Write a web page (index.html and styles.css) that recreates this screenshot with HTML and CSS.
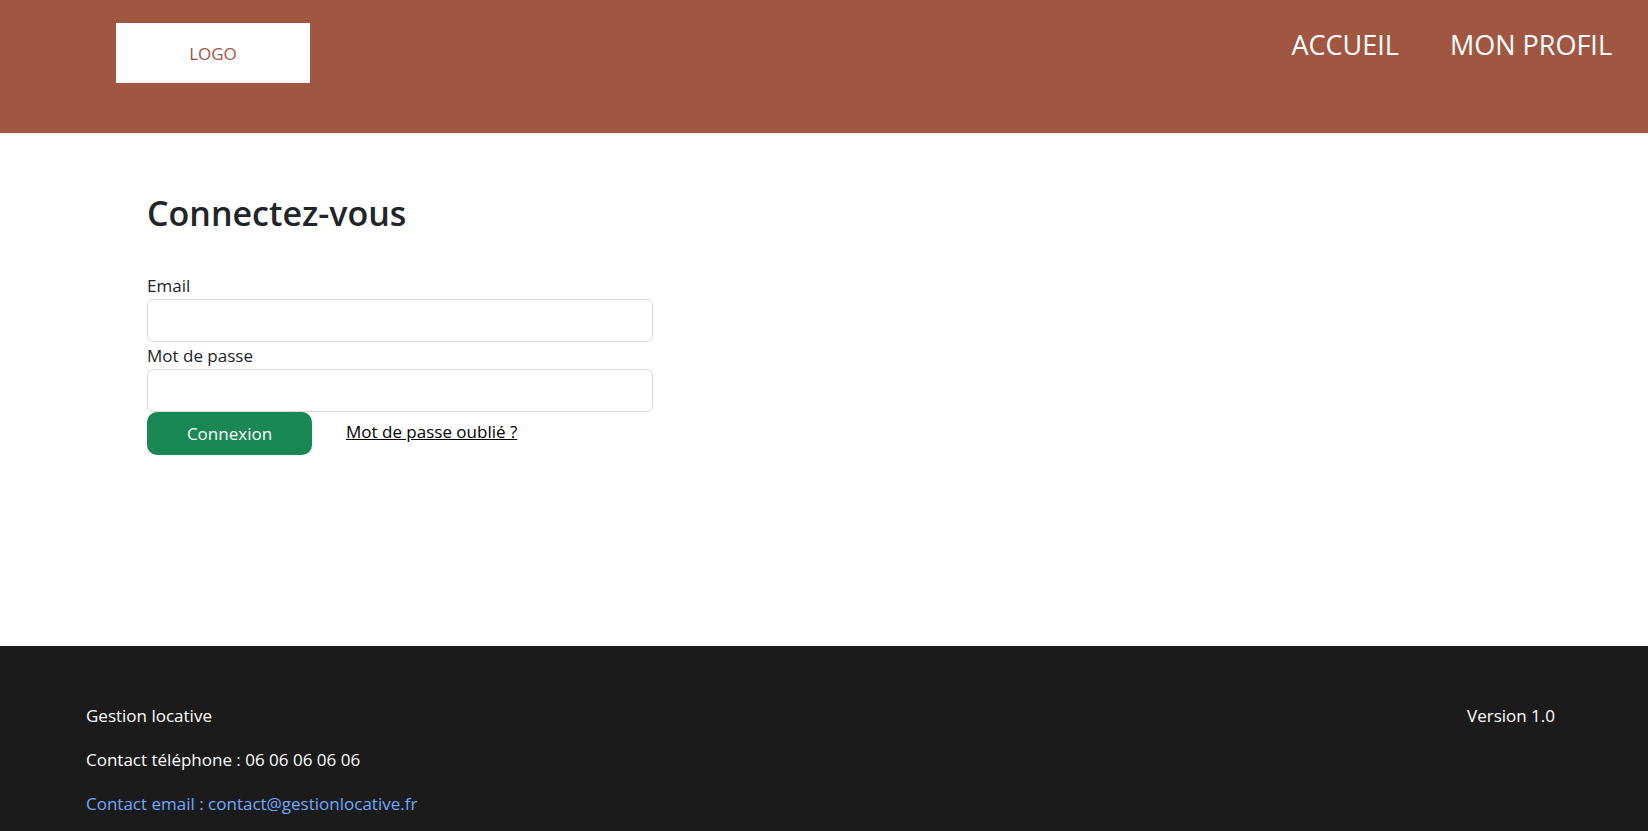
FILE: index.html
```html
<!DOCTYPE html>
<html lang="fr">
<head>
<title>Gestion locative - Connexion</title>
<meta charset="utf-8">
<meta name="viewport" content="width=device-width, initial-scale=1">
    <link rel="stylesheet" href="styles.css">
</head>
<body>
    <header class="topbar">
        <div class="logo">LOGO</div>
        <nav class="topnav">
            <a href="index.html">ACCUEIL</a>
            <a href="profil.html">MON PROFIL</a>
        </nav>
    </header>

    <main class="content">
        <h2>Connectez-vous</h2>
        <form id="loginForm" class="login-form">
            <label for="email">Email</label>
            <input type="email" id="email" name="email">

            <label for="password">Mot de passe</label>
            <input type="password" id="password" name="password">

            <div class="form-actions">
                <button type="submit">Connexion</button>
                <a href="oubli.html">Mot de passe oublié ?</a>
            </div>
        </form>
    </main>

    <footer class="footer">
        <div class="footer-left">
            <p>Gestion locative</p>
            <p>Contact téléphone : 06 06 06 06 06</p>
            <p class="footer-mail">Contact email : contact@gestionlocative.fr</p>
        </div>
        <div class="footer-right">
            <p>Version 1.0</p>
        </div>
    </footer>
</body>
</html>
```

FILE: styles.css
```css
body {
    font-family: "Open Sans", "Noto Sans", Arial, sans-serif;
    margin: 0;
    padding: 0;
    background-color: #fff;
    color: #212529;
    min-height: 100vh;
    display: flex;
    flex-direction: column;
}
.topbar {
    background-color: #a15642;
    height: 133px;
    box-sizing: border-box;
    padding: 23px 36px 0 116px;
    display: flex;
    justify-content: space-between;
    align-items: flex-start;
}
.logo {
    width: 194px;
    height: 60px;
    background: white;
    color: #a15642;
    font-size: 17px;
    display: flex;
    align-items: center;
    justify-content: center;
}
.topnav {
    display: flex;
    gap: 51px;
    margin-top: 3px;
}
.topnav a {
    color: white;
    text-decoration: none;
    font-size: 27px;
    line-height: 38px;
}
.content {
    flex: 1;
    padding: 60px 0 0 147px;
}
.content h2 {
    font-size: 34px;
    font-weight: 600;
    line-height: 40px;
    margin: 0 0 39px;
}
.login-form {
    width: 506px;
    display: flex;
    flex-direction: column;
}
label {
    font-size: 17px;
    line-height: 27px;
}
input {
    height: 43px;
    box-sizing: border-box;
    border: 1px solid #d9d9d9;
    border-radius: 6px;
    padding: 6px 12px;
    font-size: 16px;
    font-family: inherit;
}
.form-actions {
    display: flex;
    align-items: center;
    gap: 34px;
}
button {
    width: 165px;
    height: 43px;
    background-color: #198754;
    color: white;
    border: none;
    border-radius: 10px;
    font-family: inherit;
    font-size: 17px;
    cursor: pointer;
}
.form-actions a {
    color: #000;
    font-size: 17px;
    margin-top: -4px;
}
.footer {
    background-color: #1b1b1b;
    color: white;
    padding: 56px 93px 0 86px;
    display: flex;
    justify-content: space-between;
    align-items: flex-start;
}
.footer p {
    font-size: 17px;
    line-height: 28px;
    margin: 0 0 16px;
}
.footer-left p:last-child {
    margin-bottom: 13px;
}
.footer-mail {
    color: #6ea8fe;
}
```
